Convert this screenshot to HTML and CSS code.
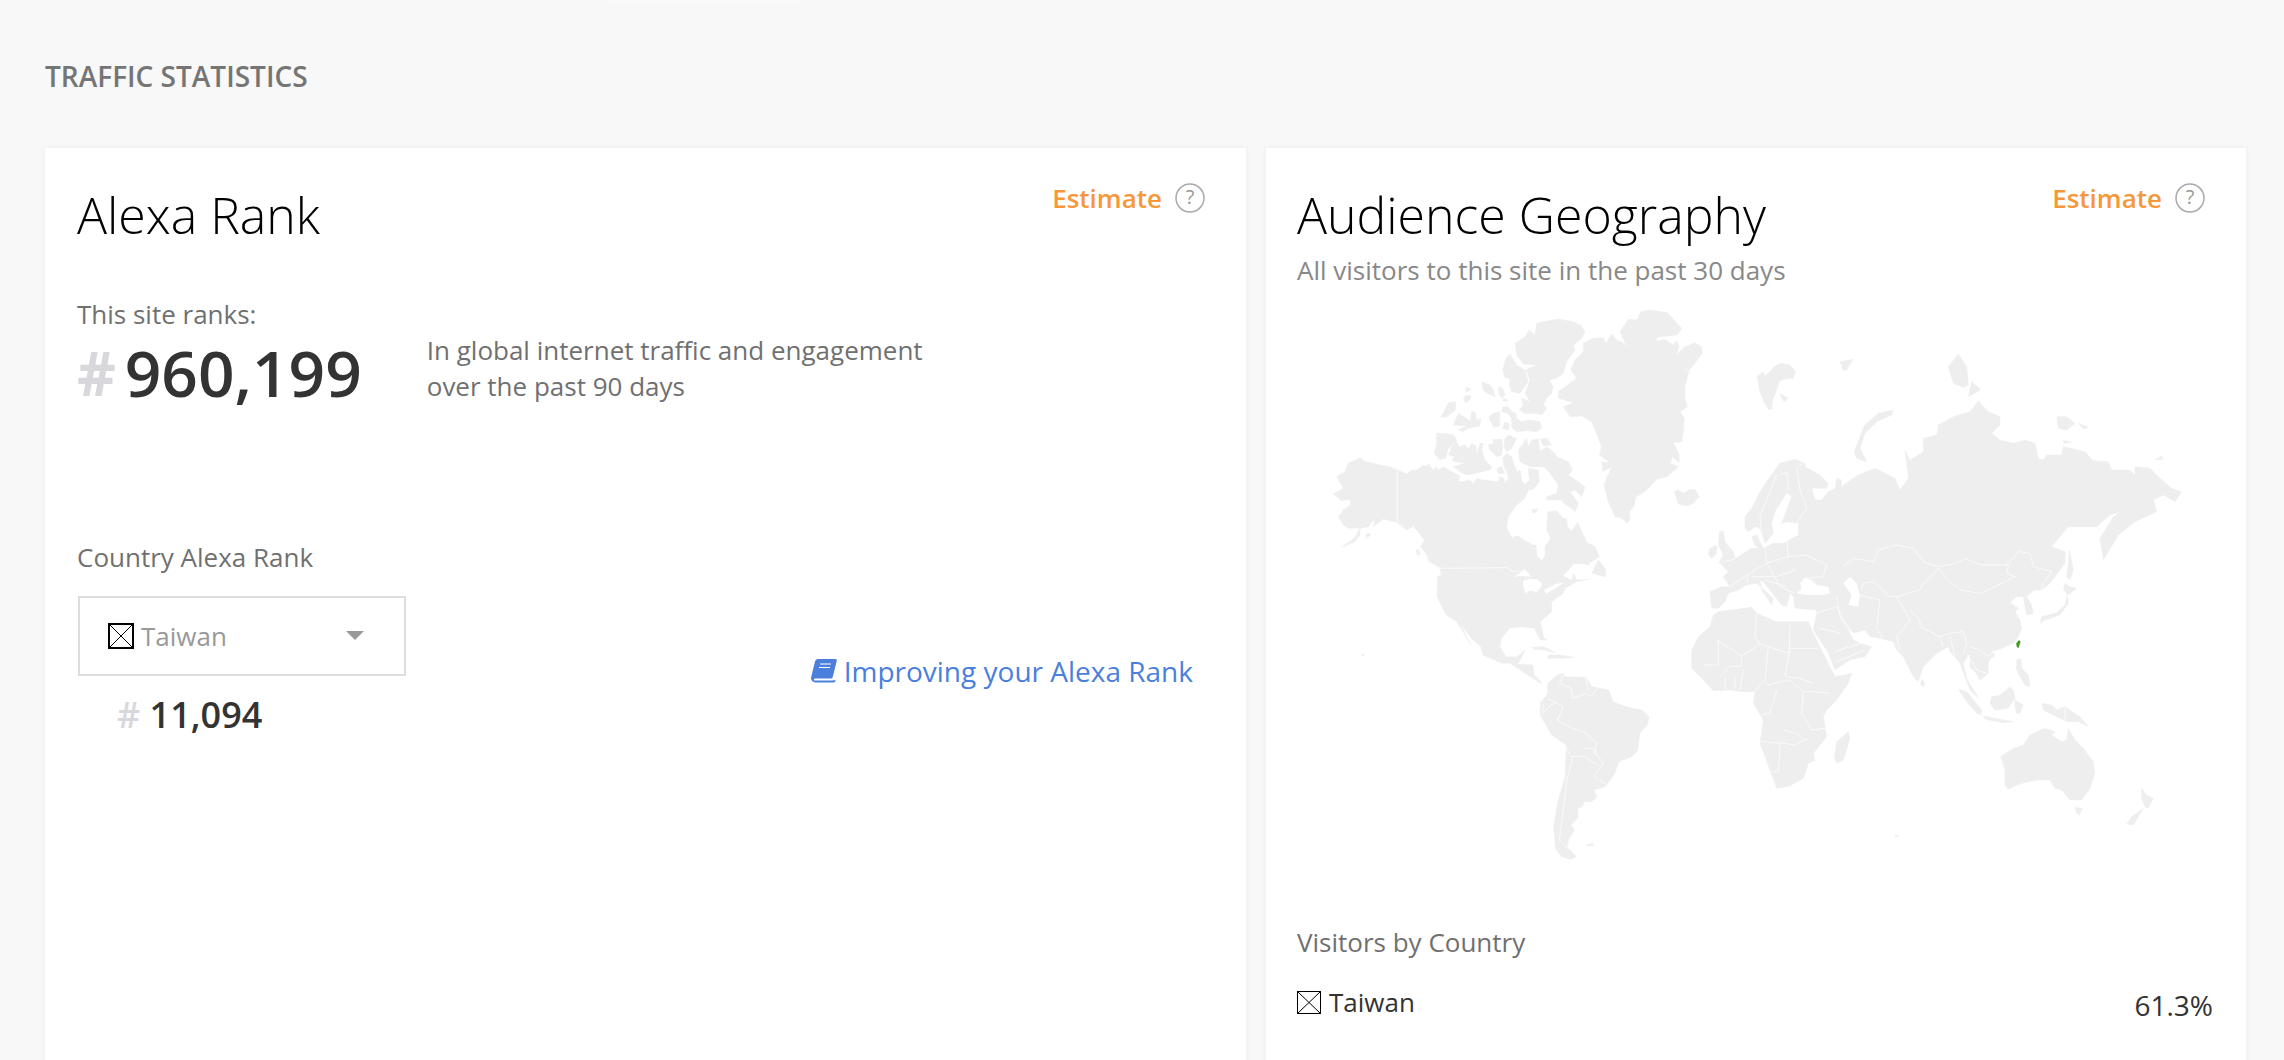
FILE: index.html
```html
<!DOCTYPE html>
<html lang="en">
<head>
<meta charset="utf-8">
<title>Traffic Statistics</title>
<link rel="stylesheet" href="styles.css">
</head>
<body>
<div class="top-strip"></div>
<h2 class="section-title">TRAFFIC STATISTICS</h2>
<main class="cards">
  <section class="card card-rank">
    <div class="card-head">
      <h3 class="card-title">Alexa Rank</h3>
      <div class="estimate"><span class="estimate-label">Estimate</span>
        <svg class="help" viewBox="0 0 30 30"><circle cx="15" cy="15" r="14" /><text x="15" y="21" text-anchor="middle">?</text></svg>
      </div>
    </div>
    <p class="lead site-ranks">This site ranks:</p>
    <div class="global-rank">
      <div class="big-rank"><span class="hash">#</span><span>960,199</span></div>
      <p class="rank-note">In global internet traffic and engagement<br>over the past 90 days</p>
    </div>
    <p class="lead country-label">Country Alexa Rank</p>
    <div class="country-row">
      <div class="country-col">
        <div class="dropdown">
          <span class="country-name">
            <svg class="tofu" viewBox="0 0 26 26"><rect x="1" y="1" width="24" height="24"/><path d="M1 1 25 25M25 1 1 25"/></svg>
            <span>Taiwan</span>
          </span>
          <span class="caret"></span>
        </div>
        <div class="small-rank"><span class="hash">#</span> 11,094</div>
      </div>
      <a class="improve" href="#">
        <svg class="book" viewBox="0 0 26 24"><path d="M7 0h17.500c1 0 1.500.8 1.300 1.700l-4 16c-.3 1.200-1 1.800-2.200 1.800H5c-1.500 0-2 .6-2.100 1-.1.500.3 1 1.300 1h17.300l3-.6-.4 1.600c-.2.700-.7 1.100-1.500 1.100H4C1.500 22.600-.500 21 .100 18.500L4 2.500C4.400 1 5.500 0 7 0Z"/><path class="book-line" d="M9 5h11M8 8.500h11"/></svg>
        <span>Improving your Alexa Rank</span>
      </a>
    </div>
  </section>

  <section class="card card-geo">
    <div class="card-head">
      <h3 class="card-title">Audience Geography</h3>
      <div class="estimate"><span class="estimate-label">Estimate</span>
        <svg class="help" viewBox="0 0 30 30"><circle cx="15" cy="15" r="14" /><text x="15" y="21" text-anchor="middle">?</text></svg>
      </div>
    </div>
    <p class="geo-sub">All visitors to this site in the past 30 days</p>
    <svg class="map" viewBox="1297 300 916 590" aria-label="World map">
      <g transform="translate(1280 290) scale(.33333)">
        <g class="land">
          <polygon points="770,100 815,90 835,87 880,95 905,108 915,125 905,145 880,165 885,180 860,215 850,250 830,265 808,270 820,290 815,310 800,325 790,345 800,355 785,375 765,370 740,372 718,360 730,345 725,325 750,335 735,310 745,285 750,270 738,240 770,225 730,222 710,195 705,160 735,140 748,120 765,135"/>
          <polygon points="690,192 710,225 735,240 745,275 720,310 695,305 688,285 690,268 675,262 668,240 678,205"/>
          <polygon points="605,275 630,285 640,300 645,320 625,312 610,300"/>
          <polygon points="655,290 668,295 675,315 665,325 658,315"/>
          <polygon points="670,325 685,330 680,335 668,332"/>
          <polygon points="560,290 573,298 560,306 555,302"/>
          <polygon points="555,318 573,316 570,330 558,338 550,328"/>
          <polygon points="505,338 528,335 525,362 500,380 483,382"/>
          <polygon points="535,370 560,385 570,395 575,365 585,365 590,390 603,385 600,408 565,415 548,425 535,420 560,408 520,405"/>
          <polygon points="640,370 660,365 658,408 640,412 635,395 628,392 628,378"/>
          <polygon points="675,395 688,402 685,420 668,415"/>
          <polygon points="668,350 685,350 695,365 708,370 710,385 725,395 750,390 780,395 785,415 770,425 740,422 710,425 695,412 695,385 682,370 665,365"/>
          <polygon points="470,430 495,430 520,435 532,452 505,475 497,505 480,510 462,490 470,465"/>
          <polygon points="530,455 538,470 555,465 565,478 575,460 588,468 590,495 600,460 610,460 605,480 615,510 635,530 632,540 605,545 565,555 545,550 535,540 520,530 555,520 525,515 515,510 525,500 505,495 515,470"/>
          <polygon points="640,448 665,448 668,470 665,495 650,500 630,480 625,465 640,460"/>
          <polygon points="685,435 710,445 695,475 680,485 672,470 675,445"/>
          <polygon points="740,445 745,470 755,450 775,447 780,485 800,470 825,490 830,500 865,515 878,540 865,555 895,575 915,592 905,620 885,600 870,605 895,640 885,665 860,645 850,640 845,630 800,630 800,620 830,610 835,585 810,550 790,530 750,530 720,515 715,480"/>
          <polygon points="780,447 800,445 815,465 790,468"/>
          <polygon points="650,535 665,530 675,550 655,552"/>
          <polygon points="755,660 772,655 770,665 760,670"/>
          <polygon points="258,735 270,728 272,735 260,745"/>
          <polygon points="408,780 418,778 420,795 412,795"/>
          <polygon points="240,503 255,515 275,518 300,525 330,530 352,540 365,545 380,552 395,540 410,540 430,525 440,530 445,520 460,542 468,530 475,540 490,530 515,545 540,558 535,572 545,575 570,570 580,582 590,565 610,570 630,572 655,575 658,560 672,565 675,580 685,565 680,545 672,530 668,505 680,490 695,500 705,530 712,545 720,540 725,570 735,585 748,570 745,535 775,540 778,575 760,598 745,600 735,625 710,645 700,660 685,680 680,712 695,742 715,738 735,752 760,765 768,765 770,795 785,812 795,800 795,770 812,745 800,720 803,665 830,662 850,685 860,685 862,710 875,722 893,697 915,745 918,755 945,770 958,800 935,815 925,825 890,822 870,835 850,858 880,850 890,870 925,868 890,875 855,895 850,910 815,935 815,965 781,995 792,1045 801,1050 781,1050 763,1015 723,1010 689,1015 664,1045 660,1070 677,1100 712,1100 735,1080 721,1110 712,1122 758,1125 763,1155 786,1178 781,1180 735,1150 689,1120 666,1120 608,1095 603,1070 574,1045 540,1000 574,1068 549,1025 530,995 522,990 499,975 471,920 473,860 482,855 485,858 480,835 445,815 440,795 420,770 432,750 400,710 380,722 350,697 310,687 280,710 285,685 265,710 240,715 240,735 225,755 185,772 222,745 240,715 205,715 190,705 175,680 190,660 212,645 210,628 185,632 160,612 190,595 170,560 195,545 205,520"/>
          <polygon points="955,810 975,835 978,860 935,850"/>
          <polygon points="1040,170 1020,125 1045,88 1072,90 1082,65 1110,60 1162,68 1205,115 1192,135 1130,142 1130,153 1155,148 1180,165 1190,152 1197,170 1188,195 1215,170 1245,158 1265,172 1267,190 1240,225 1230,238 1210,240 1228,242 1215,290 1215,330 1222,350 1200,365 1213,385 1210,425 1205,455 1180,458 1197,490 1198,518 1178,500 1170,520 1195,530 1160,560 1130,568 1110,590 1090,608 1068,620 1062,648 1048,665 1050,690 1040,700 1025,685 1005,680 985,635 972,585 995,530 968,545 965,515 990,518 958,495 965,470 945,420 935,395 905,378 870,380 850,350 880,338 835,325 835,305 890,265 872,240 885,210 910,185 910,160 940,145 970,143 978,160 995,132 1012,152 1025,155"/>
          <polygon points="1183,605 1195,600 1210,610 1225,600 1245,598 1258,620 1240,640 1220,648 1195,642 1190,625"/>
          <polygon points="1432,258 1450,245 1455,258 1475,240 1480,232 1500,220 1530,225 1547,245 1540,265 1510,268 1498,275 1490,300 1478,330 1475,358 1465,358 1452,335 1438,300"/>
        </g>
        <g class="water">
          <ellipse cx="812" cy="577" rx="6" ry="10"/>
          <polygon points="730,880 755,868 785,890 770,905 735,900"/>
          <polygon points="850,858 885,822 925,825 905,840 880,850 875,870"/>
        </g>
        <g class="border">
          <polyline points="352,540 352,695 380,722 400,710 432,750 420,770 440,795 445,815 483,835 680,833 700,845 725,845"/>
        </g>
      </g>
      <g transform="translate(1280 560) scale(.3827 .33333)">
        <g class="water">
          <polygon points="635,62 650,57 672,58 686,72 668,100 660,86 642,100 636,82"/>
          <polygon points="612,50 640,28 656,50 630,48"/>
          <polygon points="690,90 720,72 742,68 720,85 695,102"/>
          <polygon points="740,48 768,12 800,12 775,30 755,40 750,50"/>
        </g>
        <g class="land">
          <polygon points="700,370 725,345 740,340 745,350 800,352 815,380 860,390 870,425 905,440 945,450 965,470 960,495 940,520 935,570 920,590 885,605 875,640 850,680 820,690 828,710 815,725 795,725 790,740 778,745 780,770 760,795 770,810 755,835 750,860 775,890 760,898 735,890 720,865 715,800 725,730 745,650 748,555 710,525 680,465 680,430 700,400"/>
          <polygon points="800,855 820,850 818,857 803,858"/>
          <polygon points="660,262 690,260 720,278 690,270 665,268"/>
          <polygon points="700,285 730,285 770,292 735,295 700,295"/>
          <polygon points="214,280 220,287 213,287"/>
        </g>
        <g class="border">
          <polyline points="740,345 730,370 760,385 765,415 800,400 810,410 830,385"/>
          <polyline points="700,415 740,440 725,480 755,500 800,520 825,545 825,580 845,610 820,650"/>
          <polyline points="690,430 685,460 720,425"/>
          <polyline points="745,555 760,590 795,590 830,615"/>
          <polyline points="765,590 750,660 735,800 730,840 755,870"/>
          <polyline points="820,650 855,675"/>
          <polyline points="795,565 820,565 825,585"/>
          <polyline points="800,352 805,390"/>
        </g>
      </g>
      <g transform="translate(1680 420) scale(.33333)">
        <g class="land">
          <polygon points="195,290 215,265 240,215 270,170 300,130 345,118 375,130 375,140 420,165 445,190 440,205 395,205 405,240 425,240 445,215 465,205 470,175 485,180 483,200 535,165 585,145 615,160 645,175 660,210 685,175 675,90 690,120 730,95 730,55 770,45 775,15 820,-10 870,-25 895,-58 925,-25 960,-10 960,15 935,40 960,60 1000,70 1035,60 1065,70 1075,115 1090,120 1100,105 1145,105 1150,80 1215,95 1240,122 1285,125 1295,150 1350,150 1365,165 1365,140 1410,145 1440,175 1475,205 1505,215 1485,245 1450,225 1420,240 1430,275 1365,305 1315,345 1270,420 1260,355 1300,290 1322,275 1290,285 1250,320 1230,320 1165,320 1115,380 1155,395 1155,430 1110,490 1085,510 1065,510 1040,530 1055,555 1060,580 1040,585 1030,530 1010,530 990,548 1015,565 1005,575 1020,600 1025,625 1015,650 1000,670 965,685 935,695 925,710 940,705 925,725 925,760 900,780 885,755 870,740 870,700 850,730 860,775 890,825 895,835 870,810 855,770 840,730 810,695 805,680 770,700 730,740 715,785 700,770 670,710 650,690 640,665 600,655 570,650 555,630 520,640 500,620 520,660 540,670 575,680 555,710 510,720 465,750 445,700 400,630 410,580 410,570 345,565 340,530 330,520 320,560 305,555 285,530 250,485 240,480 245,510 275,555 280,535 230,490 200,495 175,510 145,520 135,545 115,565 95,565 90,515 125,500 150,500 130,470 145,455 120,430 160,420 190,400 215,385 235,385 225,375 215,350 230,345 250,385 280,370 310,370 355,345 355,310 320,305 305,310 335,230 320,218 285,275 275,310 280,340 255,370 240,325 225,320 205,335 195,325"/>
          <polygon points="118,335 130,332 135,365 160,395 165,415 145,420 115,430 130,405 115,375"/>
          <polygon points="90,385 110,375 110,400 95,415 85,405"/>
          <polygon points="1162,525 1155,555 1130,578 1085,590 1080,610 1095,600 1140,585 1165,550"/>
          <polygon points="1155,490 1170,500 1190,505 1165,525 1150,510"/>
          <polygon points="1168,390 1180,450 1170,480 1160,470 1165,430"/>
          <polygon points="935,700 945,700 940,712 930,712"/>
          <polygon points="1010,720 1022,715 1025,745 1045,765 1050,800 1035,795 1020,770 1010,750"/>
          <polygon points="990,800 1000,810 1005,835 985,865 945,870 930,850 935,830 960,825"/>
          <polygon points="835,808 860,815 905,870 905,885 890,880 860,845"/>
          <polygon points="910,888 970,900 1000,905 970,908 915,898"/>
          <polygon points="1005,840 1030,855 1020,880 1010,880 1005,860"/>
          <polygon points="1085,850 1115,855 1130,870 1155,860 1200,890 1225,920 1195,905 1160,905 1110,880 1090,870"/>
          <polygon points="725,778 735,790 730,800 722,795"/>
          <polygon points="1165,925 1185,960 1210,985 1240,1025 1245,1060 1230,1105 1205,1140 1170,1140 1145,1110 1125,1105 1110,1080 1080,1080 1045,1085 1010,1095 985,1108 975,1095 975,1050 962,1010 1000,985 1030,975 1050,945 1080,930 1095,925 1125,935 1115,945 1145,965 1160,960"/>
          <polygon points="1185,1162 1208,1165 1198,1185 1190,1180"/>
          <polygon points="1385,1105 1400,1125 1420,1135 1405,1165 1395,1160 1385,1135"/>
          <polygon points="1390,1165 1360,1215 1340,1212 1355,1190"/>
          <polygon points="505,935 510,955 490,1020 470,1030 463,1010 470,965"/>
          <polygon points="645,1243 655,1247 648,1250"/>
          <polygon points="835,-198 860,-160 865,-105 850,-98 820,-110 805,-160"/>
          <polygon points="875,-115 903,-90 865,-70"/>
          <polygon points="640,-30 635,-15 590,5 555,40 540,85 560,125 530,115 522,95 540,50 555,15 595,-20"/>
          <polygon points="480,-175 518,-182 500,-150 490,-150"/>
          <polygon points="300,-80 325,-65 312,-55 305,-65"/>
          <polygon points="1130,-10 1160,-10 1185,10 1160,30 1135,25"/>
          <polygon points="1195,10 1225,22 1210,28"/>
          <polygon points="1425,120 1445,108 1450,118"/>
          <polygon points="1150,60 1175,68 1152,70"/>
          <polygon points="115,575 150,570 215,562 230,580 290,605 335,605 385,605 400,640 420,680 455,750 465,770 515,760 505,790 470,840 440,870 430,890 440,950 400,1000 405,1020 385,1030 370,1075 330,1098 290,1105 270,1050 240,970 250,900 220,850 225,815 185,815 150,810 100,812 70,780 35,745 35,690 55,650 90,620 100,585"/>
        </g>
        <g class="water">
          <polygon points="360,490 375,475 395,480 410,495 445,500 450,520 425,525 380,525 350,520 365,505"/>
          <polygon points="490,490 510,470 530,490 540,525 535,560 505,555 515,525"/>
        </g>
        <polygon class="taiwan" points="1017,660 1022,665 1015,685 1010,680 1009,670"/>
        <g class="border">
          <polyline points="230,580 225,650 240,675"/>
          <polyline points="110,660 185,708 240,672 265,680 328,700 330,610"/>
          <polyline points="330,685 415,685"/>
          <polyline points="115,660 115,735 70,735"/>
          <polyline points="185,708 183,740 150,740 120,770"/>
          <polyline points="265,680 255,780 222,815"/>
          <polyline points="328,700 315,770 360,775 400,790"/>
          <polyline points="260,795 330,780 370,815 400,815 450,820"/>
          <polyline points="290,810 270,880 245,885"/>
          <polyline points="370,815 365,880 395,930 440,925"/>
          <polyline points="240,965 310,970 345,975 385,955"/>
          <polyline points="300,970 295,1055 275,1055"/>
          <polyline points="310,930 350,940 370,960"/>
          <polyline points="190,750 180,810"/>
          <polyline points="135,770 135,810"/>
          <polyline points="165,770 165,805"/>
          <polyline points="490,440 520,415 580,425 595,390 650,375 700,385 730,425 775,440 830,430 855,415 900,435 980,435 1015,395 1050,400 1060,440 1115,455 1090,490 1085,510"/>
          <polyline points="775,445 805,480 840,510 900,520 945,500 1005,470 980,460 985,435"/>
          <polyline points="775,445 730,490 720,510 650,530 630,530 580,485 550,490 545,510"/>
          <polyline points="470,530 480,590 500,620"/>
          <polyline points="540,525 600,540 590,625 610,655"/>
          <polyline points="650,530 690,600 650,650 660,690"/>
          <polyline points="690,570 720,600 720,620 780,650 810,640 850,635 860,670 850,700"/>
          <polyline points="780,650 790,680"/>
          <polyline points="810,650 830,730"/>
          <polyline points="870,680 900,690 925,710"/>
          <polyline points="860,700 890,750 920,760"/>
          <polyline points="1040,530 1065,510"/>
          <polyline points="410,580 470,560 490,600 520,640"/>
          <polyline points="420,625 480,640"/>
          <polyline points="465,695 540,670"/>
          <polyline points="470,725 555,690"/>
          <polyline points="255,385 260,430 200,465 205,490"/>
          <polyline points="320,360 325,410 260,430"/>
          <polyline points="325,410 380,405 440,435 430,470 370,475"/>
          <polyline points="260,430 300,500 345,520"/>
          <polyline points="215,470 290,470 345,450"/>
          <polyline points="255,480 320,500"/>
          <polyline points="370,130 350,145 360,210 380,265 350,310"/>
          <polyline points="290,165 240,290 245,340"/>
          <polyline points="300,165 320,155 325,210"/>
          <polyline points="150,500 200,465"/>
          <polyline points="1155,860 1155,905"/>
        </g>
      </g>
    </svg>
    <p class="lead visitors-label">Visitors by Country</p>
    <div class="visitor-row">
      <span class="visitor-country">
        <svg class="tofu tofu-tall" viewBox="0 0 24 23"><rect x=".5" y=".5" width="23" height="22"/><path d="M1 1 23 22M23 1 1 22"/></svg>
        <span>Taiwan</span>
      </span>
      <span class="visitor-share">61.3%</span>
    </div>
  </section>
</main>
</body>
</html>
```

FILE: styles.css
```css
* { box-sizing: border-box; }

html, body { height: 100%; }

body {
  margin: 0;
  overflow: hidden;
  background: #f8f8f8;
  font-family: "Open Sans", "Noto Sans", sans-serif;
  color: #707070;
}

p, h2, h3 { margin: 0; font-weight: 400; }

.top-strip {
  width: 197px;
  height: 3px;
  margin-left: 606px;
  background: #fafafa;
}

.section-title {
  margin: 55px 0 0 45px;
  font-size: 28px;
  line-height: 36px;
  font-weight: 600;
  color: #757575;
}

.cards {
  display: grid;
  grid-template-columns: 1201px 980px;
  gap: 20px;
  margin: 54px 0 0 45px;
}

.card {
  height: 1000px;
  background: #fff;
  box-shadow: 0 0 6px rgba(0, 0, 0, .06);
}

.card-rank { padding: 0 33px 0 32px; }
.card-geo { padding: 0 33px 0 31px; }

.card-head {
  display: flex;
  justify-content: space-between;
  align-items: flex-start;
  padding-top: 33px;
}

.card-title {
  font-size: 50px;
  line-height: 68px;
  font-weight: 300;
  color: #000;
}

.estimate {
  display: flex;
  align-items: center;
  gap: 13px;
  margin: -1px 8px 0 0;
  line-height: 36px;
}

.estimate-label {
  font-size: 26px;
  font-weight: 600;
  color: #f5973a;
}

.help { width: 30px; height: 30px; }
.help circle { fill: none; stroke: #aaa; stroke-width: 1.500; }
.help text { font-family: "Open Sans", sans-serif; font-size: 20px; fill: #999; }

.lead {
  font-size: 26px;
  line-height: 34px;
}

.global-rank {
  display: flex;
  align-items: flex-start;
  gap: 65px;
}

.big-rank {
  display: flex;
  gap: 9px;
  font-size: 64px;
  line-height: 84px;
  font-weight: 600;
  color: #333;
  white-space: nowrap;
}

.big-rank .hash { font-size: 60px; font-weight: 700; }

.hash { color: #d8d8dc; }

.rank-note {
  padding-top: 1px;
  font-size: 26px;
  line-height: 36px;
}

.site-ranks { margin-top: 48px; }
.country-label { margin-top: 125px; }

.country-row {
  display: flex;
  justify-content: space-between;
  margin-top: 22px;
}

.dropdown {
  display: flex;
  align-items: center;
  justify-content: space-between;
  width: 328px;
  height: 80px;
  margin-left: 1px;
  padding: 0 40px 0 28px;
  border: 2px solid #ddd;
}

.country-name {
  display: flex;
  align-items: center;
  gap: 7px;
  font-size: 26px;
  color: #999;
}

.tofu { width: 26px; height: 26px; flex: none; }
.tofu rect { fill: none; stroke: #000; stroke-width: 2; }
.tofu path { fill: none; stroke: #000; stroke-width: 1; }
.tofu-tall { width: 24px; height: 23px; }
.tofu-tall rect { stroke-width: 1; }

.caret {
  width: 0;
  height: 0;
  margin-top: -2px;
  border-left: 9px solid transparent;
  border-right: 9px solid transparent;
  border-top: 9px solid #999;
}

.small-rank {
  margin: 14px 0 0 40px;
  font-size: 36px;
  line-height: 50px;
  font-weight: 600;
  color: #333;
}

.improve {
  display: flex;
  align-items: center;
  gap: 7px;
  height: 40px;
  margin: 55px 20px 0 0;
  font-size: 28px;
  color: #4a7fdc;
  text-decoration: none;
}

.book { width: 26px; height: 24px; fill: #4a7fdc; }
.book-line { fill: none; stroke: #fff; stroke-width: 1; }

.geo-sub {
  margin-top: 4px;
  font-size: 26px;
  line-height: 34px;
  color: #888;
}

.map {
  display: block;
  width: 916px;
  height: 590px;
  margin-top: 13px;
}

.land { fill: #eee; stroke: #eee; stroke-width: .5; stroke-linejoin: round; }
.land polygon { vector-effect: non-scaling-stroke; }
.water { fill: #fff; }
.taiwan { fill: #3f9b1f; }
.border { fill: none; stroke: #fff; stroke-width: .7; }
.border polyline { vector-effect: non-scaling-stroke; }

.visitors-label { margin-top: 35px; }

.visitor-row {
  display: flex;
  justify-content: space-between;
  margin-top: 26px;
}

.visitor-country {
  display: flex;
  align-items: center;
  gap: 8px;
  height: 34px;
  font-size: 26px;
  color: #333;
}

.visitor-share {
  margin-top: 3px;
  font-size: 28px;
  line-height: 34px;
  color: #333;
}
```
